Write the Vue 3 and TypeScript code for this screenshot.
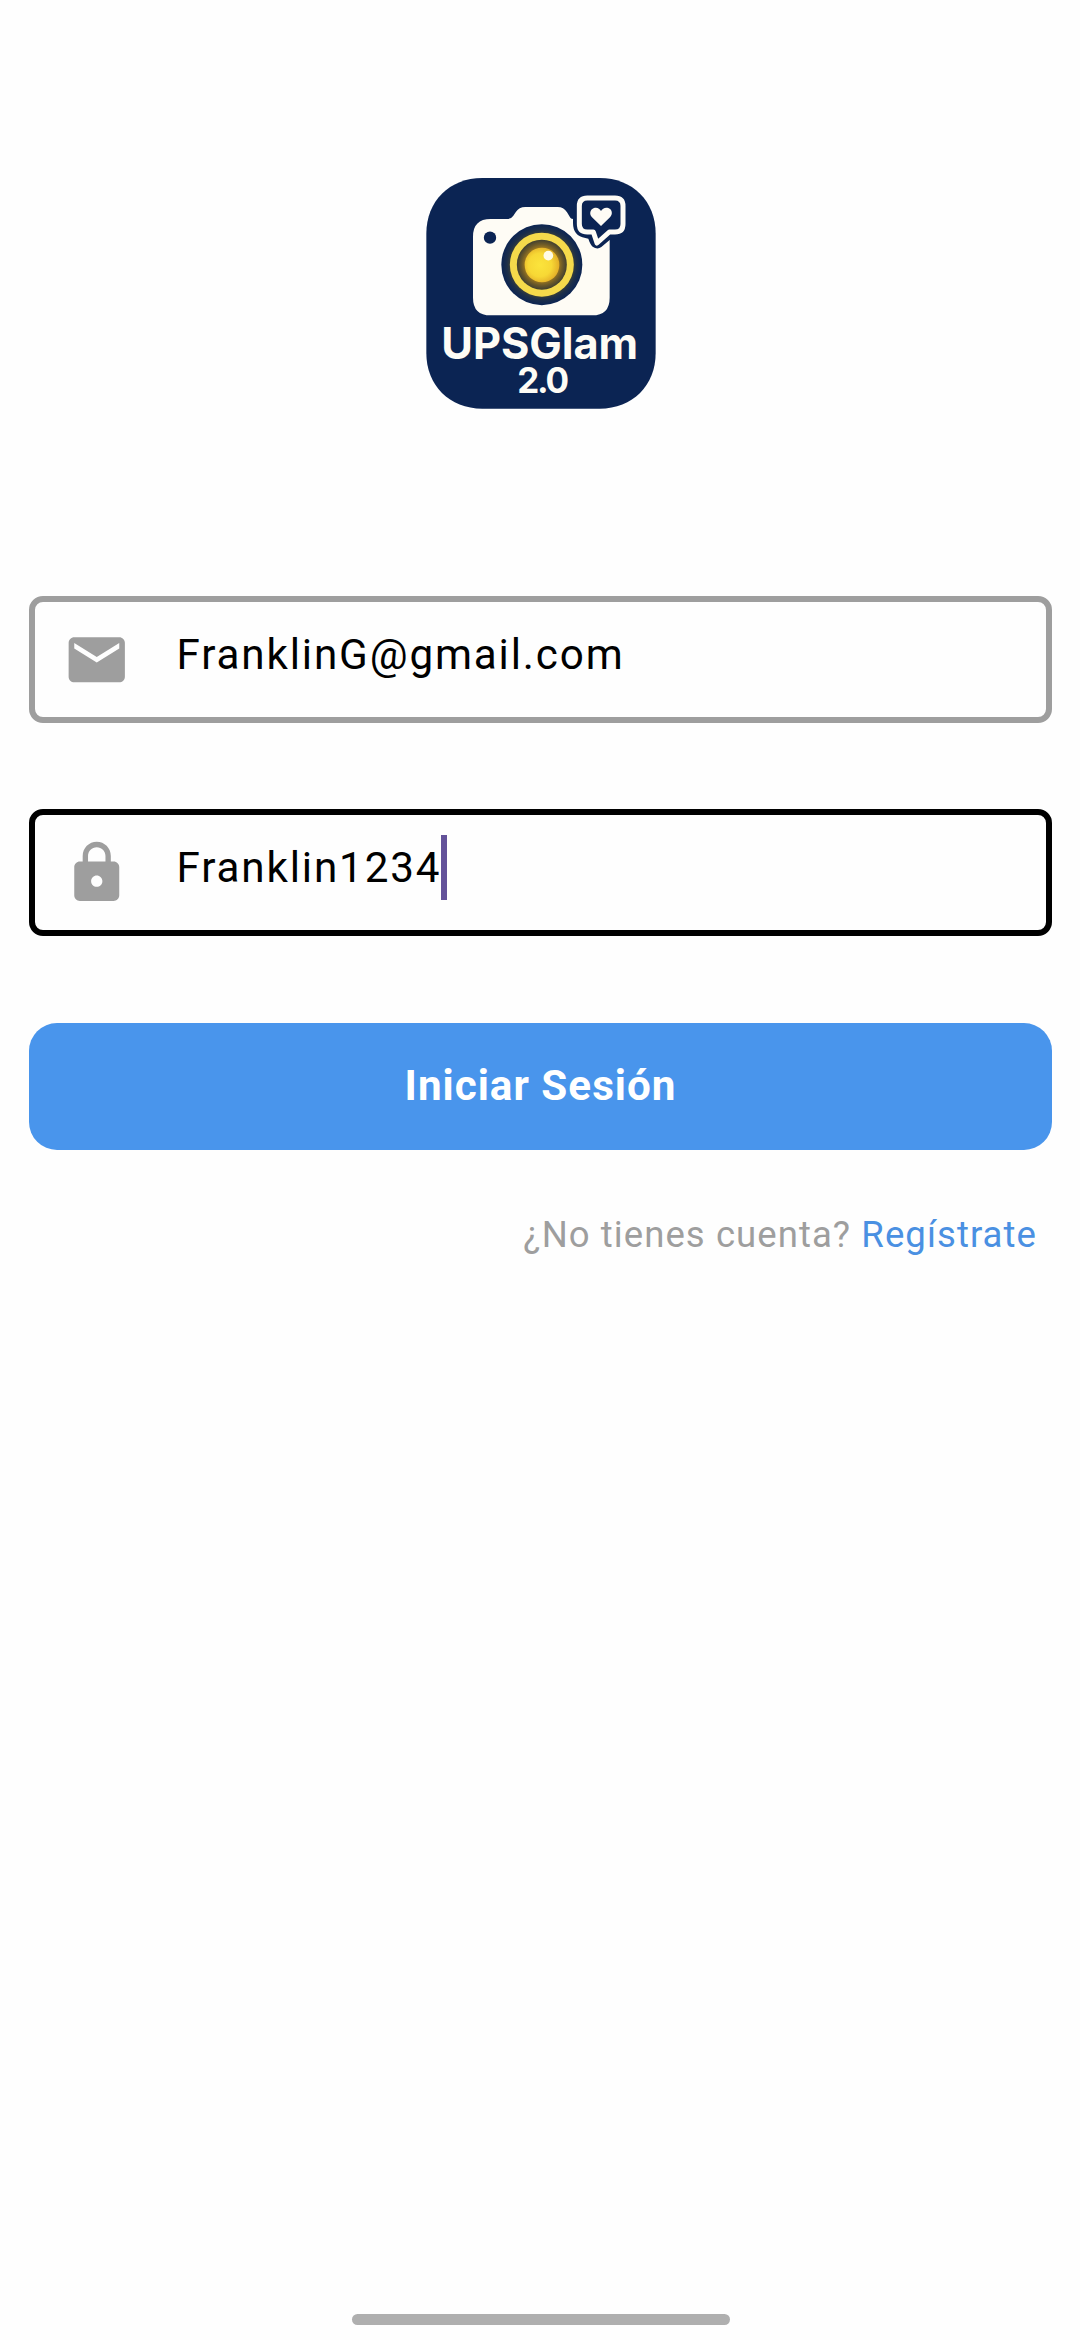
<script setup lang="ts">
import { ref } from 'vue'

const email = ref('FranklinG@gmail.com')
const password = ref('Franklin1234')
</script>

<template>
  <main class="screen">
    <svg class="logo" viewBox="0 0 750 750" role="img" aria-label="UPSGlam 2.0">
      <defs>
        <radialGradient id="halo" cx="50%" cy="50%" r="50%">
          <stop offset="0.76" stop-color="#3d4136" />
          <stop offset="0.86" stop-color="#1d2f49" />
          <stop offset="1" stop-color="#0b2453" />
        </radialGradient>
        <radialGradient id="glass" cx="50%" cy="50%" r="50%">
          <stop offset="0.62" stop-color="#a9801d" />
          <stop offset="0.82" stop-color="#6d5a28" />
          <stop offset="1" stop-color="#403f30" />
        </radialGradient>
        <radialGradient id="core" cx="44%" cy="50%" r="56%">
          <stop offset="0" stop-color="#fbe43c" />
          <stop offset="0.6" stop-color="#f7d835" />
          <stop offset="1" stop-color="#e3ad27" />
        </radialGradient>
      </defs>
      <path
        class="navy"
        d="M199 30H551C650 30 719 100 719 197V555C719 652 650 722 551 722H199C100 722 31 652 31 555V197C31 100 100 30 199 30Z"
      />
      <path
        class="cream"
        d="M171 206Q171 153 224 153H272Q286 153 292 143L299 133Q309 117 328 117H425Q443 117 453 133L463 149Q466 153 472 153H535Q581 160 581 210V389Q581 442 528 442H224Q171 442 171 389Z"
      />
      <path
        class="navy"
        d="M512 70H602Q642 75 642 118V172Q640 205 605 212L581 216L556 237Q544 246 530 236Q523 230 517 212L508 210Q471 204 471 165V112Q471 72 512 70Z"
      />
      <path
        class="bubble"
        d="M514 90H597Q621 90 621 114V168Q621 192 597 192H580L543 225L532 192H514Q490 192 490 168V114Q490 90 514 90Z"
      />
      <path
        class="cream"
        d="M555 174L528 148C519 139 522 124 534 120C543 117 551 121 555 129C559 121 568 117 577 120C589 124 591 139 582 148Z"
      />
      <circle class="navy" cx="222" cy="209" r="18.500" />
      <circle cx="377.500" cy="290" r="121.500" fill="url(#halo)" />
      <circle cx="377.500" cy="290" r="96" fill="#f5da4b" />
      <circle cx="377.500" cy="290" r="75" fill="url(#glass)" />
      <circle cx="378" cy="291" r="52" fill="url(#core)" />
      <circle cx="397" cy="263" r="14.500" fill="#fffbe6" />
      <text class="brand" x="76" y="573" font-size="130" textLength="590">UPSGlam</text>
      <text class="brand" x="304" y="674" font-size="105" textLength="155">2.0</text>
    </svg>

    <form class="form" @submit.prevent>
      <div class="field">
        <svg class="icon" viewBox="0 0 24 24">
          <path d="M20 4H4c-1.100 0-1.990.9-1.990 2L2 18c0 1.100.9 2 2 2h16c1.100 0 2-.9 2-2V6c0-1.100-.9-2-2-2zm0 4l-8 5-8-5V6l8 5 8-5v2z" />
        </svg>
        <span class="value">{{ email }}</span>
      </div>

      <div class="field focused">
        <svg class="icon" viewBox="0 0 24 24">
          <path d="M18 8h-1V6c0-2.760-2.240-5-5-5S7 3.240 7 6v2H6c-1.100 0-2 .9-2 2v10c0 1.100.9 2 2 2h12c1.100 0 2-.9 2-2V10c0-1.100-.9-2-2-2zm-6 9c-1.100 0-2-.9-2-2s.9-2 2-2 2 .9 2 2-.9 2-2 2zm3.100-9H8.900V6c0-1.710 1.390-3.100 3.100-3.100s3.100 1.390 3.100 3.100v2z" />
        </svg>
        <span class="value">{{ password }}</span>
        <span class="caret"></span>
      </div>

      <button class="submit" type="submit">Iniciar Sesión</button>
    </form>

    <p class="signup">¿No tienes cuenta? <a class="link">Regístrate</a></p>

    <div class="home-bar"></div>
  </main>
</template>

<style>
body {
  margin: 0;
  background: #fefefe;
}
</style>

<style scoped>
.screen {
  box-sizing: border-box;
  display: flex;
  flex-direction: column;
  width: 1080px;
  height: 2340px;
  padding: 168px 28px 15px 29px;
  background: #fefefe;
  font-family: Roboto, sans-serif;
  overflow: hidden;
}

.logo {
  flex: none;
  align-self: center;
  width: 250px;
  height: 250px;
}

.navy {
  fill: #0b2453;
}

.cream {
  fill: #fefcf5;
}

.bubble {
  fill: #0b2453;
  stroke: #fefcf5;
  stroke-width: 15;
  stroke-linejoin: round;
}

.brand {
  fill: #fefcf5;
  font-family: Inter, sans-serif;
  font-weight: 700;
}

.form {
  display: flex;
  flex-direction: column;
  margin-top: 178px;
}

.field {
  box-sizing: border-box;
  display: flex;
  align-items: center;
  height: 127px;
  margin-bottom: 86px;
  padding-left: 27.600px;
  border: 6px solid #9e9e9e;
  border-radius: 14px;
}

.focused {
  border-color: #000;
  margin-bottom: 87px;
}

.icon {
  flex: none;
  width: 67.500px;
  height: 67.500px;
  fill: #9e9e9e;
}

.value {
  margin-left: 46.400px;
  padding-bottom: 10px;
  color: #000;
  font-size: 42.200px;
  line-height: 50px;
  letter-spacing: 1.860px;
}

.caret {
  width: 5.600px;
  height: 65px;
  margin-bottom: 10px;
  background: #635299;
}

.submit {
  height: 127px;
  padding: 0 0 2px;
  border: 0;
  border-radius: 28px;
  background: #4995ec;
  color: #fff;
  font-family: inherit;
  font-size: 42.200px;
  font-weight: 700;
  letter-spacing: 1px;
}

.signup {
  margin: 62px 15px 0 0;
  color: #9e9e9e;
  font-size: 36.560px;
  line-height: 46px;
  letter-spacing: 1.050px;
  text-align: right;
}

.link {
  color: #4a90e2;
}

.home-bar {
  align-self: center;
  width: 378px;
  height: 11px;
  margin-top: auto;
  border-radius: 6px;
  background: #afafaf;
}
</style>
